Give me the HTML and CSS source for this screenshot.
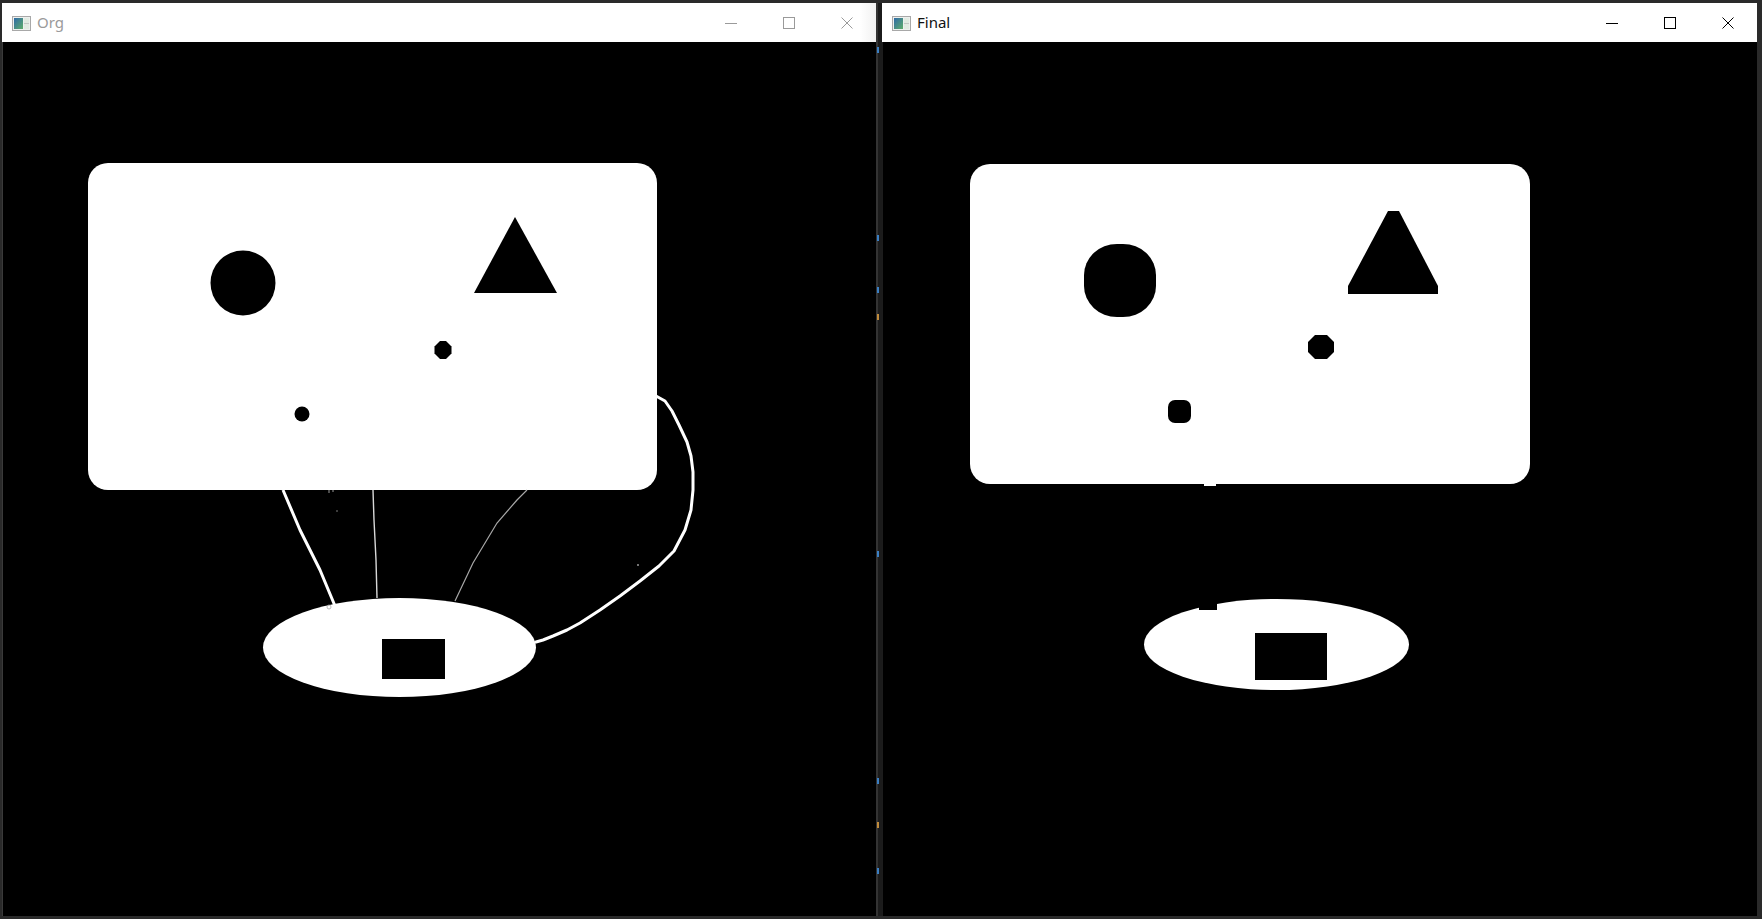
FILE: index.html
```html
<!DOCTYPE html>
<html>
<head>
<meta charset="utf-8">
<link rel="stylesheet" href="styles.css">
</head>
<body>
<div class="desk">
  <section class="win inactive">
    <header class="titlebar">
      <svg class="appicon" width="19" height="15" viewBox="0 0 19 15">
        <defs>
          <linearGradient id="g1" x1="0" y1="0" x2="1" y2="1">
            <stop offset="0" stop-color="#2f6aa8"/>
            <stop offset="1" stop-color="#5fae6a"/>
          </linearGradient>
        </defs>
        <rect x="0.5" y="0.5" width="18" height="14" fill="#eef0ee" stroke="#a8a8a8"/>
        <rect x="2" y="2" width="9" height="11" fill="url(#g1)"/>
        <rect x="12" y="2" width="5" height="11" fill="#e2ebe2"/>
        <path d="M12 7.5H17" stroke="#c4c8c4"/>
      </svg>
      <span class="title">Org</span>
      <div class="controls">
        <span class="btn"><svg width="12" height="12" viewBox="0 0 12 12"><path d="M0 6.5H12"/></svg></span>
        <span class="btn"><svg width="12" height="12" viewBox="0 0 12 12"><rect x="0.5" y="0.5" width="11" height="11"/></svg></span>
        <span class="btn"><svg width="12" height="12" viewBox="0 0 12 12"><path d="M0.5 0.5L11.5 11.5M11.5 0.5L0.5 11.5"/></svg></span>
      </div>
    </header>
    <div class="canvas">
      <svg class="scene" width="873" height="874" viewBox="3 42 873 874">
        <rect x="88" y="163" width="569" height="327" rx="20" ry="20" fill="#fff"/>
        <circle cx="243" cy="283" r="32.5" fill="#000"/>
        <polygon points="515,217 557,293 474,293" fill="#000"/>
        <polygon points="440,341 446,341 451.5,346.5 451.5,353.5 446,359 440,359 434.5,353.5 434.5,346.5" fill="#000"/>
        <circle cx="302" cy="414" r="7.5" fill="#000"/>
        <ellipse cx="399.5" cy="647.5" rx="136.5" ry="49.5" fill="#fff"/>
        <rect x="382" y="639" width="63" height="40" fill="#000"/>
        <polyline points="283,490 300,530 320,570 335,606" fill="none" stroke="#fff" stroke-width="3" stroke-linejoin="round"/>
        <polyline points="373,490 374,520 376,560 377,598" fill="none" stroke="#d8d8d8" stroke-width="1.4"/>
        <polyline points="527,490 517,500 497,523 473,563 455,601" fill="none" stroke="#a8a8a8" stroke-width="1.2"/>
        <polyline points="656,396 665,401 672,411 679,425 687,442 691,456 693,472 693,490 691,510 685,530 674,551 659,566 640,581 620,596 600,610 580,623 567,630 553,636 543,640 536,642" fill="none" stroke="#fff" stroke-width="3" stroke-linejoin="round" stroke-linecap="round"/>
        <circle cx="337" cy="511" r="0.8" fill="#888"/>
        <circle cx="638" cy="565" r="1" fill="#999"/>
        <circle cx="329" cy="607" r="2" fill="none" stroke="#aaa" stroke-width="0.8"/>
        <path d="M329 490v3M333 490v2" stroke="#999" stroke-width="1"/>
      </svg>
    </div>
  </section>

  <div class="seam">
    <i class="mark blue" style="top:44px"></i>
    <i class="mark blue" style="top:232px"></i>
    <i class="mark blue" style="top:284px"></i>
    <i class="mark amber" style="top:311px"></i>
    <i class="mark blue" style="top:548px"></i>
    <i class="mark blue" style="top:775px"></i>
    <i class="mark amber" style="top:819px"></i>
    <i class="mark blue" style="top:865px"></i>
  </div>

  <section class="win active">
    <header class="titlebar">
      <svg class="appicon" width="19" height="15" viewBox="0 0 19 15">
        <defs>
          <linearGradient id="g2" x1="0" y1="0" x2="1" y2="1">
            <stop offset="0" stop-color="#2f6aa8"/>
            <stop offset="1" stop-color="#5fae6a"/>
          </linearGradient>
        </defs>
        <rect x="0.5" y="0.5" width="18" height="14" fill="#eef0ee" stroke="#a8a8a8"/>
        <rect x="2" y="2" width="9" height="11" fill="url(#g2)"/>
        <rect x="12" y="2" width="5" height="11" fill="#e2ebe2"/>
        <path d="M12 7.5H17" stroke="#c4c8c4"/>
      </svg>
      <span class="title">Final</span>
      <div class="controls">
        <span class="btn"><svg width="12" height="12" viewBox="0 0 12 12"><path d="M0 6.5H12"/></svg></span>
        <span class="btn"><svg width="12" height="12" viewBox="0 0 12 12"><rect x="0.5" y="0.5" width="11" height="11"/></svg></span>
        <span class="btn"><svg width="12" height="12" viewBox="0 0 12 12"><path d="M0.5 0.5L11.5 11.5M11.5 0.5L0.5 11.5"/></svg></span>
      </div>
    </header>
    <div class="canvas">
      <svg class="scene" width="874" height="874" viewBox="883 42 874 874">
        <rect x="970" y="164" width="560" height="320" rx="20" ry="20" fill="#fff"/>
        <rect x="1204" y="483" width="12" height="3" fill="#fff"/>
        <rect x="1084" y="244" width="72" height="73" rx="33" ry="31" fill="#000"/>
        <polygon points="1388,211 1399,211 1438,286 1438,294 1348,294 1348,286" fill="#000"/>
        <polygon points="1315,335 1327,335 1334,342 1334,352 1327,359 1315,359 1308,352 1308,342" fill="#000"/>
        <rect x="1168" y="400" width="23" height="23" rx="7" ry="7" fill="#000"/>
        <ellipse cx="1276.5" cy="644.5" rx="132.5" ry="45.5" fill="#fff"/>
        <rect x="1199" y="598" width="18" height="12" fill="#000"/>
        <rect x="1255" y="633" width="72" height="47" fill="#000"/>
      </svg>
    </div>
  </section>
</div>
</body>
</html>
```

FILE: styles.css
```css
html, body {
  margin: 0;
  padding: 0;
}

body {
  width: 1762px;
  height: 919px;
  overflow: hidden;
  background: #2a2a2a;
  font-family: "Noto Sans", "Open Sans", "DejaVu Sans", sans-serif;
}

.desk {
  display: flex;
  box-sizing: border-box;
  height: 919px;
  padding: 3px 5px 3px 2px;
}

.win {
  display: flex;
  flex-direction: column;
}

.win.inactive {
  width: 874px;
}

.win.active {
  width: 875px;
}

.titlebar {
  height: 39px;
  flex: none;
  display: flex;
  align-items: center;
  background: #ffffff;
  box-sizing: border-box;
  padding-left: 10px;
}

.win.inactive .titlebar {
  background: linear-gradient(to right, #ffffff 0, #ffffff 858px, #f1f1f1 874px);
}

.appicon {
  display: block;
  flex: none;
  margin-top: 1px;
}

.title {
  margin-left: 6px;
  font-size: 15px;
  line-height: 1;
  margin-top: -1px;
}

.inactive .title {
  color: #9a9a9a;
}

.active .title {
  color: #111111;
}

.controls {
  margin-left: auto;
  display: flex;
  height: 100%;
}

.btn {
  width: 58px;
  height: 100%;
  display: flex;
  align-items: center;
  justify-content: center;
}

.btn svg {
  display: block;
  fill: none;
  stroke-width: 1;
}

.inactive .btn svg {
  stroke: #9a9a9a;
}

.active .btn svg {
  stroke: #000000;
}

.canvas {
  flex: 1;
  background: #000;
  border-left: 1px solid #3a3a3a;
  overflow: hidden;
}

.active .canvas {
  border-left-color: #1c1c1c;
}

.scene {
  display: block;
}

.seam {
  width: 6px;
  flex: none;
  position: relative;
  background: linear-gradient(to right, #333333 0, #333333 2px, #1b1b1b 2px);
}

.mark {
  position: absolute;
  left: 1px;
  width: 2px;
  height: 6px;
}

.mark.blue {
  background: #3a7fc4;
}

.mark.amber {
  background: #c08a3a;
}
```
